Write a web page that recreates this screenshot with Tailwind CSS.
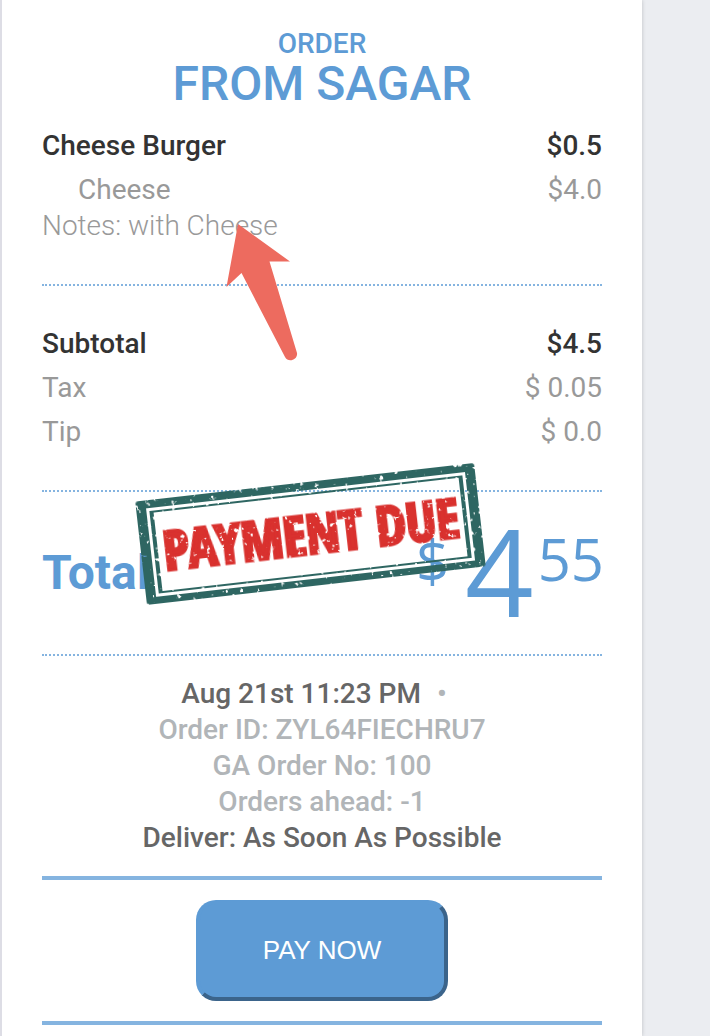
<!DOCTYPE html>
<html lang="en">

<head>
    <meta charset="UTF-8">
    <meta name="viewport" content="width=device-width, initial-scale=1.0">
    <title>Order from Sagar</title>
    <script src="https://cdn.jsdelivr.net/npm/@tailwindcss/browser@4"></script>
</head>

<body class="bg-[#ebedf1] font-['Roboto',sans-serif] text-[28px] leading-9 text-[#999999]">
    <main class="mr-17 min-h-screen border-l-2 border-[#dddde5] bg-white px-10 pt-[26px] shadow-[0_0_4px_rgba(0,0,0,0.2)]">
        <header class="text-center font-medium text-[#5d9bd5]">
            <p>ORDER</p>
            <h1 class="text-5xl leading-11">FROM SAGAR</h1>
        </header>

        <!-- Items -->
        <section class="relative mt-[22px] border-b-2 border-dotted border-[#85b4e0] pb-10">
            <div class="flex justify-between font-medium text-[#333333]">
                <span>Cheese Burger</span>
                <span>$0.5</span>
            </div>
            <div class="mt-2 flex justify-between pl-9">
                <span>Cheese</span>
                <span>$4.0</span>
            </div>
            <p class="font-light">Notes: with Cheese</p>
            <svg class="absolute top-24 left-45 z-10 h-36 w-20" viewBox="222 224 80 144" aria-hidden="true">
                <path d="M238 224L290 261.5H269.500L297 353C298 360 288 363 285 357L241.500 273L226.500 287Z" fill="#ed6b5f" />
            </svg>
        </section>

        <!-- Charges -->
        <section class="border-b-2 border-dotted border-[#85b4e0] py-10">
            <div class="flex justify-between font-medium text-[#333333]">
                <span>Subtotal</span>
                <span>$4.5</span>
            </div>
            <div class="mt-2 flex justify-between">
                <span>Tax</span>
                <span>$ 0.05</span>
            </div>
            <div class="mt-2 flex justify-between">
                <span>Tip</span>
                <span>$ 0.0</span>
            </div>
        </section>

        <!-- Total -->
        <section class="relative flex h-41 items-center justify-between border-b-2 border-dotted border-[#85b4e0] text-[#5d9bd5]">
            <h2 class="text-5xl font-bold">Total</h2>
            <div class="-mr-0.5 flex items-center pb-1 font-['Open_Sans',sans-serif]">
                <span class="mr-4 mb-5 text-[58px] leading-none font-medium">$</span>
                <span class="text-[120px] leading-none">4</span>
                <span class="mb-6 ml-1 text-[58px] leading-none">55</span>
            </div>
            <svg class="absolute -top-8 left-22 h-38 w-90" viewBox="130 460 360 152" role="img" aria-label="Payment due">
                <defs>
                    <filter id="worn" x="-5%" y="-10%" width="110%" height="120%">
                        <feTurbulence type="fractalNoise" baseFrequency="0.2" numOctaves="3" seed="8" result="noise" />
                        <feColorMatrix in="noise" type="matrix" values="0 0 0 0 0  0 0 0 0 0  0 0 0 0 0  0 0 0 -16 11.900" result="holes" />
                        <feComposite in="SourceGraphic" in2="holes" operator="in" result="cut" />
                        <feDisplacementMap in="cut" in2="noise" scale="1" xChannelSelector="R" yChannelSelector="G" />
                    </filter>
                </defs>
                <g transform="rotate(-6.5 310 534)">
                    <g filter="url(#worn)">
                        <path fill="#2f6662" fill-rule="evenodd" d="M143 482H478Q481 482 481 485V583Q481 586 478 586H143Q140 586 140 583V485Q140 482 143 482ZM150 490V579H471V490Z" />
                        <path fill="#2f6662" fill-rule="evenodd" d="M153 493H468V576H153ZM157 495V574H464V495Z" />
                        <text x="311" y="554" text-anchor="middle" fill="#d9302f" stroke="#d9302f" stroke-width="3" font-size="54" font-weight="900" font-family="'Noto Sans ExtraCondensed', 'Noto Sans Condensed', 'Open Sans Condensed', 'Roboto Condensed', 'Liberation Sans Narrow', Roboto, sans-serif">PAYMENT DUE</text>
                    </g>
                </g>
            </svg>
        </section>

        <!-- Order details -->
        <section class="border-b-4 border-[#85b4e0] py-5 text-center font-medium text-[#b1b5b8]">
            <p><span class="text-[#666666]">Aug 21st 11:23 PM</span><span class="mx-4">•</span></p>
            <p>Order ID: ZYL64FIECHRU7</p>
            <p>GA Order No: 100</p>
            <p>Orders ahead: -1</p>
            <p class="text-[#666666]">Deliver: As Soon As Possible</p>
        </section>

        <div class="border-b-4 border-[#85b4e0] py-5 text-center">
            <button type="button" class="block mx-auto rounded-[20px] border-4 border-t-[#5d9bd5] border-l-[#5d9bd5] border-r-[#3b648b] border-b-[#3b648b] bg-[#5d9bd5] px-[63px] py-7 font-['Liberation_Sans',sans-serif] text-[26px] leading-[37px] text-white">PAY NOW</button>
        </div>
    </main>
</body>

</html>
